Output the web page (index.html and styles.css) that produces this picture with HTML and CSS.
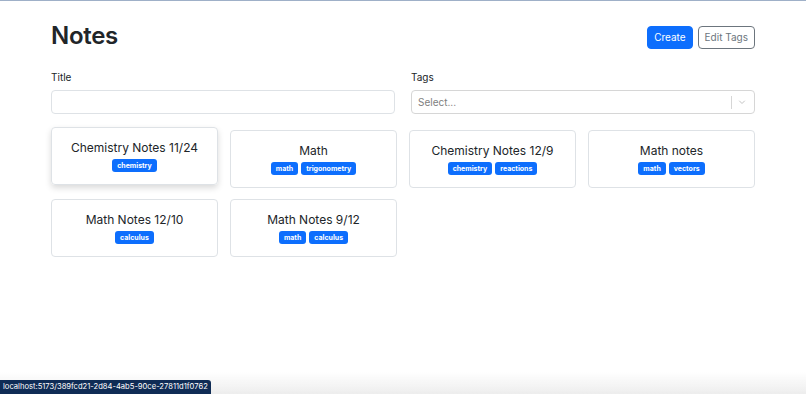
FILE: index.html
```html
<!DOCTYPE html>
<html>
<head>
<meta charset="utf-8">
<title>Notes</title>
<link rel="stylesheet" href="styles.css">
</head>
<body>
    <div class="container">
        <div class="header">
            <h1 class="title">Notes</h1>
            <div class="actions">
                <button class="btn btn-primary">Create</button>
                <button class="btn btn-outline">Edit Tags</button>
            </div>
        </div>

        <div class="filters">
            <div class="field">
                <label>Title</label>
                <input type="text" class="input">
            </div>
            <div class="field">
                <label>Tags</label>
                <div class="select">
                    <span class="placeholder">Select...</span>
                    <span class="indicators">
                        <span class="separator"></span>
                        <svg width="10" height="10" viewBox="0 0 20 20"><path d="M4.5 7.5 L10 13 L15.5 7.5" fill="none" stroke="#b3b3b3" stroke-width="1.6"/></svg>
                    </span>
                </div>
            </div>
        </div>

        <div class="notes">
            <div class="card hover">
                <div class="card-title">Chemistry Notes 11/24</div>
                <div class="tags"><span class="badge">chemistry</span></div>
            </div>
            <div class="card">
                <div class="card-title">Math</div>
                <div class="tags"><span class="badge">math</span><span class="badge">trigonometry</span></div>
            </div>
            <div class="card">
                <div class="card-title">Chemistry Notes 12/9</div>
                <div class="tags"><span class="badge">chemistry</span><span class="badge">reactions</span></div>
            </div>
            <div class="card">
                <div class="card-title">Math notes</div>
                <div class="tags"><span class="badge">math</span><span class="badge">vectors</span></div>
            </div>
            <div class="card">
                <div class="card-title">Math Notes 12/10</div>
                <div class="tags"><span class="badge">calculus</span></div>
            </div>
            <div class="card">
                <div class="card-title">Math Notes 9/12</div>
                <div class="tags"><span class="badge">math</span><span class="badge">calculus</span></div>
            </div>
        </div>
    </div>

    <div class="fade"></div>
    <div class="status">localhost:5173/389fcd21-2d84-4ab5-90ce-27811d1f0762</div>
</body>
</html>
```

FILE: styles.css
```css
* {
  font-family: Inter, "Noto Sans", Arial, sans-serif;
  box-sizing: border-box;
}
html {
  height: 100%;
}
body {
  min-height: 100%;
  margin: 0;
  background: #fff;
  color: #212529;
  border-top: 1px solid #9fb0c8;
  overflow: hidden;
}

.container {
  width: 704px;
  margin: 0 auto;
}
.header {
  display: flex;
  align-items: center;
  justify-content: space-between;
  margin-top: 24px;
  height: 24px;
}
.title {
  margin: 0;
  margin-top: -4px;
  font-size: 24px;
  font-weight: 600;
  letter-spacing: -0.3px;
}
.actions {
  display: flex;
  gap: 5px;
}
.btn {
  height: 23px;
  padding: 0 6px;
  font-size: 10px;
  border-radius: 4px;
  line-height: 21px;
}
.btn-primary {
  background: #0d6efd;
  border: 1px solid #0d6efd;
  color: #fff;
}
.btn-outline {
  background: #fff;
  border: 1px solid #6c757d;
  color: #6c757d;
}

.filters {
  display: grid;
  grid-template-columns: 1fr 1fr;
  gap: 16px;
  margin-top: 22px;
}
.field label {
  display: block;
  font-size: 10px;
  margin-bottom: 7px;
}
.input {
  width: 100%;
  height: 24px;
  border: 1px solid #dee2e6;
  border-radius: 4px;
  display: block;
  margin: 0;
}
.select {
  height: 24px;
  border: 1px solid #d6d6d6;
  border-radius: 4px;
  display: flex;
  align-items: center;
  justify-content: space-between;
  padding-left: 6px;
}
.placeholder {
  font-size: 10px;
  color: #808080;
}
.indicators {
  display: flex;
  align-items: center;
  gap: 5px;
  padding-right: 7px;
}
.separator {
  width: 1px;
  height: 13px;
  background: #d6d6d6;
}

.notes {
  display: grid;
  grid-template-columns: repeat(4, 1fr);
  column-gap: 12px;
  row-gap: 11px;
  margin-top: 16px;
}
.card {
  height: 58px;
  border: 1px solid #dee2e6;
  border-radius: 4px;
  display: flex;
  flex-direction: column;
  align-items: center;
  justify-content: center;
  gap: 4px;
}
.card.hover {
  transform: translateY(-3px);
  box-shadow: 0 3px 6px rgba(0, 0, 0, 0.15);
}
.card-title {
  font-size: 12px;
  color: #212529;
}
.tags {
  display: flex;
  gap: 3px;
}
.badge {
  background: #0d6efd;
  color: #fff;
  font-size: 7px;
  font-weight: 700;
  padding: 2px 5px;
  border-radius: 3px;
}

.fade {
  position: fixed;
  left: 0;
  right: 0;
  bottom: 0;
  height: 22px;
  background: linear-gradient(to bottom, rgba(235, 235, 235, 0), #ededed);
}
.status {
  position: fixed;
  left: 0;
  bottom: 0;
  height: 14px;
  padding: 0 3px;
  background: #0f2c55;
  color: #fff;
  font-size: 7.6px;
  line-height: 14px;
  border-top-right-radius: 3px;
}
```
